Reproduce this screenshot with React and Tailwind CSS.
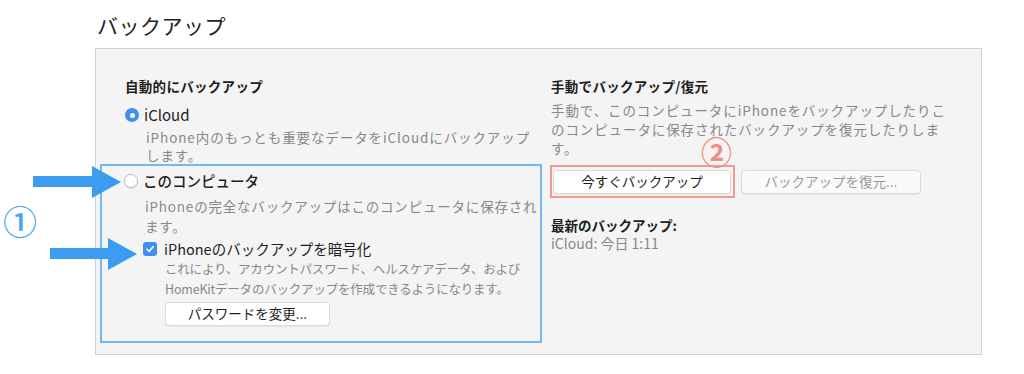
import React from 'react';

const FONT = { fontFamily: '"Noto Sans CJK JP", "Noto Sans", sans-serif' };

function Radio({ checked }) {
  if (checked) {
    return (
      <span className="w-[14px] h-[14px] rounded-full bg-[#3e8ff1] flex items-center justify-center shrink-0">
        <span className="w-[5px] h-[5px] rounded-full bg-white" />
      </span>
    );
  }
  return (
    <span className="w-[14px] h-[14px] rounded-full bg-white border border-[#bdbdbd] shadow-[0_1px_1px_rgba(0,0,0,0.08)] shrink-0" />
  );
}

function Checkbox() {
  return (
    <span className="w-[14px] h-[14px] rounded-[3px] bg-[#3e8ff1] flex items-center justify-center shrink-0">
      <svg width="10" height="10" viewBox="0 0 10 10" fill="none">
        <path d="M2 5.2 L4.2 7.4 L8.2 2.6" stroke="white" strokeWidth="1.6" strokeLinecap="round" strokeLinejoin="round" />
      </svg>
    </span>
  );
}

function MacButton({ children, disabled, className = '' }) {
  return (
    <button
      className={`h-[24px] rounded-[4px] border border-[#dadada] shadow-[0_1px_1px_rgba(0,0,0,0.06)] text-[13.5px] leading-none flex items-center justify-center ${
        disabled ? 'bg-[#fafafa] text-[#9a9a9a]' : 'bg-white text-[#1e1e1e]'
      } ${className}`}
    >
      {children}
    </button>
  );
}

export default function App() {
  return (
    <div className="relative w-[1024px] h-[374px] bg-white overflow-hidden text-[#1e1e1e]" style={FONT}>
      {/* Title */}
      <div className="h-[48px] pt-[10px] pl-[97px] text-[21px] leading-[30px] tracking-[0.5px] text-[#222]">
        バックアップ
      </div>

      {/* Panel */}
      <div className="ml-[95px] w-[887px] h-[307px] border border-[#d2d2d2] bg-[#f4f4f4] flex">
        {/* Left column */}
        <div className="w-[454px] pl-[29px] pt-[28px] flex flex-col">
          <div className="text-[13.5px] leading-[18px] font-bold tracking-[0.3px]">自動的にバックアップ</div>

          <div className="mt-[10px] h-[20px] flex items-center gap-[5px]">
            <Radio checked />
            <span className="text-[15px] text-[#1e1e1e]">iCloud</span>
          </div>
          <div className="mt-[3px] pl-[21px] text-[13.5px] leading-[18px] text-[#888] tracking-[0.9px]">
            iPhone内のもっとも重要なデータをiCloudにバックアップ
            <br />
            します。
          </div>

          {/* このコンピュータ (blue annotation frame) */}
          <div className="ml-[-25px] w-[442px] border-2 border-[#72b9f2] pt-[5px] pb-[15px] pl-[22px] flex flex-col">
            <div className="h-[20px] flex items-center gap-[5px]">
              <Radio />
              <span className="text-[14.5px] font-medium">このコンピュータ</span>
            </div>
            <div className="mt-[5px] pl-[21px] text-[13.5px] leading-[20px] text-[#888] tracking-[0.8px] whitespace-nowrap">
              iPhoneの完全なバックアップはこのコンピュータに保存され
              <br />
              ます。
            </div>

            <div className="mt-[3px] ml-[19px] h-[20px] flex items-center gap-[7px]">
              <Checkbox />
              <span className="text-[14.5px]">iPhoneのバックアップを暗号化</span>
            </div>
            <div className="pl-[41px] text-[12.5px] leading-[20px] text-[#888] tracking-[-0.2px]">
              これにより、アカウントパスワード、ヘルスケアデータ、および
              <br />
              HomeKitデータのバックアップを作成できるようになります。
            </div>
            <div className="mt-[3px] ml-[41px]">
              <MacButton className="w-[165px] h-[23px]">パスワードを変更...</MacButton>
            </div>
          </div>
        </div>

        {/* Right column */}
        <div className="flex-1 pt-[28px] pl-[1px] flex flex-col">
          <div className="text-[13.5px] leading-[18px] font-bold tracking-[0.3px]">手動でバックアップ/復元</div>
          <div className="mt-[6px] text-[13.5px] leading-[19px] text-[#888] tracking-[0.9px] whitespace-nowrap">
            手動で、このコンピュータにiPhoneをバックアップしたりこ
            <br />
            のコンピュータに保存されたバックアップを復元したりしま
            <br />
            す。
          </div>
          <div className="mt-[7px] ml-[-1px] flex items-center gap-[6px]">
            <div className="border-2 border-[#f19a90] pt-[3px] pl-[1px] pr-[2px] pb-[2px]">
              <MacButton className="w-[178px]">今すぐバックアップ</MacButton>
            </div>
            <MacButton disabled className="w-[180px] h-[23px]">バックアップを復元...</MacButton>
          </div>
          <div className="mt-[18px] text-[13.5px] leading-[18px] font-bold">最新のバックアップ:</div>
          <div className="text-[14px] leading-[18px] text-[#888]">iCloud: 今日 1:11</div>
        </div>
      </div>

      {/* Annotations */}
      <svg className="absolute left-0 top-0 pointer-events-none" width="150" height="290" viewBox="0 0 150 290">
        <rect x="33" y="176" width="61" height="11" fill="#3c9df0" />
        <polygon points="92,166 121,182 92,198" fill="#3c9df0" />
        <rect x="50" y="248" width="60" height="11" fill="#3c9df0" />
        <polygon points="108,238 137,254 108,270" fill="#3c9df0" />
      </svg>
      <span className="absolute left-[3px] top-[204px] text-[34px] leading-none font-medium text-[#4aa7f0]">①</span>
      <span className="absolute left-[701px] top-[135px] text-[31px] leading-none font-bold text-[#ef8e84]">②</span>
    </div>
  );
}
